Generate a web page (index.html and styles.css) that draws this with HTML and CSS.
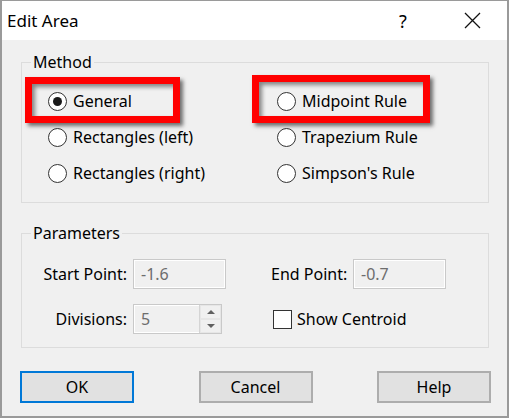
FILE: index.html
```html
<!DOCTYPE html>
<html>
<head>
<meta charset="utf-8">
<title>Edit Area</title>
<link rel="stylesheet" href="styles.css">
</head>
<body>
<div class="window">
  <div class="titlebar">
    <span class="title">Edit Area</span>
    <div class="title-btns">
      <span class="tbtn help">?</span>
      <span class="tbtn close"><svg width="17" height="17" viewBox="0 0 17 17"><path d="M1 1 L16 16 M16 1 L1 16" stroke="#111" stroke-width="1.3" fill="none"/></svg></span>
    </div>
  </div>
  <div class="client">
    <fieldset class="group method">
      <legend>Method</legend>
      <div class="radio-grid">
        <label class="radio checked"><span class="dot"></span>General</label>
        <label class="radio"><span class="dot"></span>Midpoint Rule</label>
        <label class="radio"><span class="dot"></span>Rectangles (left)</label>
        <label class="radio"><span class="dot"></span>Trapezium Rule</label>
        <label class="radio"><span class="dot"></span>Rectangles (right)</label>
        <label class="radio"><span class="dot"></span>Simpson's Rule</label>
      </div>
    </fieldset>
    <fieldset class="group params">
      <legend>Parameters</legend>
      <div class="param-grid">
        <span class="plabel right">Start Point:</span>
        <span class="field">-1.6</span>
        <span class="spacer"></span>
        <span class="plabel">End Point:</span>
        <span class="field">-0.7</span>

        <span class="plabel right">Divisions:</span>
        <span class="field spin"><span class="spin-val">5</span><span class="spin-btns"><span class="sb up"></span><span class="sb down"></span></span></span>
        <span class="spacer"></span>
        <label class="check"><span class="box"></span>Show Centroid</label>
      </div>
    </fieldset>
    <div class="buttons">
      <span class="btn default">OK</span>
      <span class="btn">Cancel</span>
      <span class="btn">Help</span>
    </div>
  </div>
  <div class="mark mark-1"></div>
  <div class="mark mark-2"></div>
</div>
</body>
</html>
```

FILE: styles.css
```css
* { box-sizing: border-box; }
html, body { margin: 0; padding: 0; }
body {
  font-family: "Noto Sans", "Open Sans", sans-serif;
  font-size: 16px;
  color: #000;
  background: #fff;
}
.window {
  position: relative;
  width: 509px;
  height: 418px;
  border: 2px solid #9a9a9a;
  border-top-width: 1px;
  background: #f0f0f0;
  display: flex;
  flex-direction: column;
}
.titlebar {
  height: 39px;
  background: #fff;
  display: flex;
  align-items: center;
  padding-left: 5px;
}
.title { font-size: 17px; line-height: 20px; }
.title-btns {
  margin-left: auto;
  display: flex;
  align-items: center;
  padding-right: 12px;
}
.tbtn {
  width: 46px;
  height: 39px;
  display: flex;
  align-items: center;
  justify-content: center;
}
.help { font-size: 18px; margin-right: 23px; }
.close svg { display: block; }
.client {
  flex: 1;
  padding: 0 18px;
}
.group {
  margin: 0 0 0 1px;
  border: 1px solid #dcdcdc;
  min-width: 0;
  padding-left: 0;
  padding-right: 0;
}
.group legend {
  padding: 0 2px;
  margin-left: 9px;
  line-height: 20px;
  height: 20px;
}
.method {
  margin-top: 12px;
  padding-top: 11px;
  padding-bottom: 11px;
}
.radio-grid {
  display: grid;
  grid-template-columns: 229px 1fr;
  grid-auto-rows: 36px;
  margin-left: 26px;
}
.radio {
  display: flex;
  align-items: center;
  gap: 6px;
}
.dot {
  width: 19px;
  height: 19px;
  border: 1px solid #333;
  border-radius: 50%;
  background: #fff;
  display: flex;
  align-items: center;
  justify-content: center;
  flex: none;
}
.radio.checked .dot::after {
  content: "";
  width: 9px;
  height: 9px;
  border-radius: 50%;
  background: #1a1a1a;
}
.params {
  margin-top: 20px;
  padding-top: 16px;
  padding-bottom: 13px;
}
.param-grid {
  display: grid;
  grid-template-columns: 95px 93px 33px 76px 93px;
  grid-template-rows: 30px 30px;
  column-gap: 6px;
  row-gap: 15px;
  align-items: center;
  margin-left: 10px;
}
.plabel { white-space: nowrap; }
.plabel.right { text-align: right; }
.field {
  height: 30px;
  border: 1px solid #c9c9c9;
  box-shadow: inset 0 0 0 1px #fff;
  color: #6d6d6d;
  display: flex;
  align-items: center;
  padding-left: 7px;
}
.spin {
  width: 89px;
  padding-left: 0;
}
.spin-val { flex: 1; padding-left: 7px; }
.spin-btns {
  width: 22px;
  height: 100%;
  display: flex;
  flex-direction: column;
  border-left: 1px solid #d4d4d4;
}
.sb {
  flex: 1;
  display: flex;
  align-items: center;
  justify-content: center;
  border: 1px solid #e6e6e6;
}
.sb.up::after {
  content: "";
  border-left: 4px solid transparent;
  border-right: 4px solid transparent;
  border-bottom: 4px solid #606060;
}
.sb.down::after {
  content: "";
  border-left: 4px solid transparent;
  border-right: 4px solid transparent;
  border-top: 4px solid #606060;
}
.check {
  grid-column: 4 / 6;
  display: flex;
  align-items: center;
  gap: 5px;
  margin-left: 2px;
}
.box {
  width: 19px;
  height: 19px;
  border: 1px solid #333;
  background: #fff;
  flex: none;
}
.buttons {
  margin-top: 23px;
  margin-right: -2px;
  display: flex;
  justify-content: space-between;
}
.btn {
  width: 114px;
  height: 32px;
  border: 2px solid #adadad;
  background: #e1e1e1;
  display: flex;
  align-items: center;
  justify-content: center;
}
.btn.default { border-color: #0078d7; }
.mark {
  position: absolute;
  border: 7px solid #ff0000;
  box-shadow: 3px 3px 4px rgba(0,0,0,0.55), inset 3px 3px 4px rgba(0,0,0,0.45);
}
.mark-1 { left: 23px; top: 76px; width: 155px; height: 46px; }
.mark-2 { left: 250px; top: 74px; width: 178px; height: 48px; }
```
